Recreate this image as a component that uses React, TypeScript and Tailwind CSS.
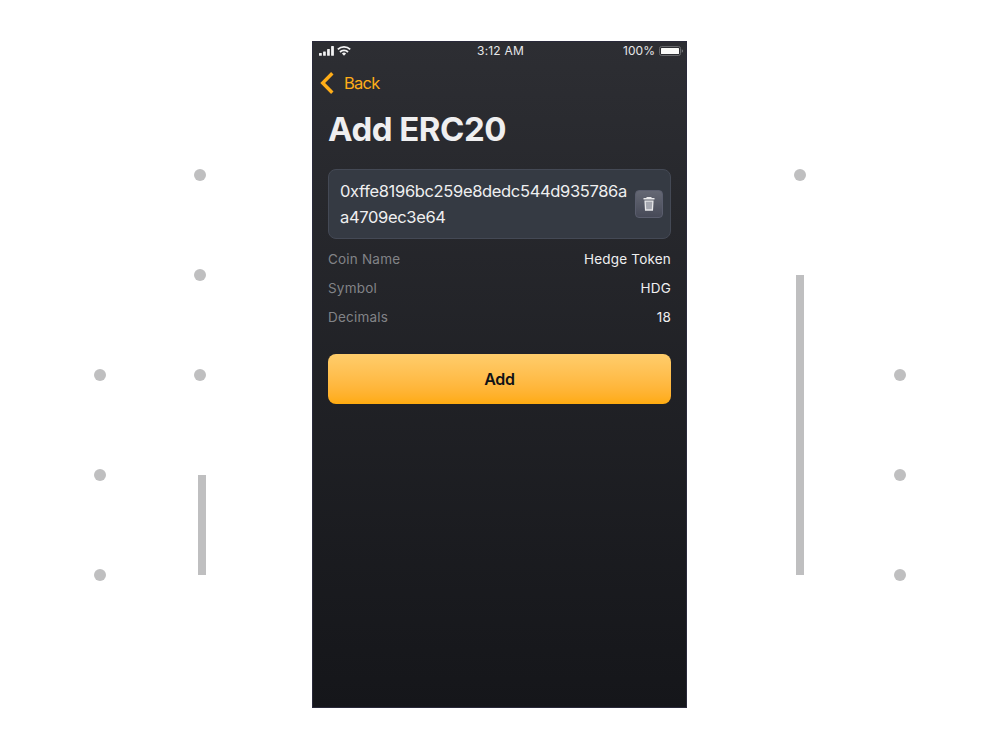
const Dot = () => <span className="block size-3 shrink-0 rounded-full bg-[#bfbfc0]" />;

const details = [
  { label: "Coin Name", value: "Hedge Token" },
  { label: "Symbol", value: "HDG" },
  { label: "Decimals", value: "18" },
];

function StatusBar() {
  return (
    <div className="grid h-5 grid-cols-3 items-center text-[12px] leading-5 text-[#e6e6e8]">
      <div className="flex items-center pl-[7px]">
        <svg width="34" height="12" viewBox="0 0 34 12" fill="#f2f2f3">
          <rect x="0" y="8" width="2.8" height="2.8" rx=".5" />
          <rect x="4.1" y="6.5" width="2.7" height="4.3" rx=".5" />
          <rect x="8.1" y="4" width="2.7" height="6.8" rx=".5" />
          <rect x="12.1" y="1" width="2.8" height="9.8" rx=".5" />
          <g fill="none" stroke="#f2f2f3" strokeWidth="1.8">
            <path d="M18.8 4.3a8.9 8.9 0 0 1 12.4 0" />
            <path d="M21 7a5.6 5.6 0 0 1 8 0" />
          </g>
          <path d="M25 10.7l-2.1-2.1a3 3 0 0 1 4.2 0z" />
        </svg>
      </div>
      <div className="pl-0.5 text-center tracking-[0.2px]">3:12 AM</div>
      <div className="flex items-center justify-end pr-[4px]">
        <span className="mr-[3px] tracking-[0.05px]">100%</span>
        <svg width="25" height="12" viewBox="0 0 25 12">
          <rect x="1.5" y="1.5" width="21" height="9" rx="2" fill="none" stroke="#68696d" />
          <rect x="3" y="3" width="18" height="6" rx=".5" fill="#fafaf9" />
          <path d="M23.8 4.3q1.2.4 1.2 1.7t-1.2 1.7z" fill="#808185" />
        </svg>
      </div>
    </div>
  );
}

function Phone() {
  return (
    <main className="h-[667px] w-[375px] shrink-0 bg-linear-to-b from-[#2d2e33] to-[#15161a] shadow-[inset_0_0_0_1px_#29293a]">
      <StatusBar />
      <button className="mt-[11px] flex h-[22px] items-center gap-[10px] pl-2 text-[16.5px] leading-[22px] tracking-[-0.75px] text-[#ffad18]">
        <svg width="14" height="22" viewBox="0 0 14 22" fill="none" stroke="#ffad18" strokeWidth="3.4">
          <path d="M12.3 1.3 2.7 11l9.6 9.7" />
        </svg>
        <span>Back</span>
      </button>
      <div className="px-4">
        <h1 className="mt-[15px] text-[33px] leading-[41px] font-bold tracking-[-0.5px] text-[#efeff0]">Add ERC20</h1>
        <div className="mt-[19px] flex h-[70px] items-center justify-between rounded-lg border border-[#444955] bg-[#353a43] pr-[7px] pl-[11px]">
          <p className="w-[289px] text-[16.5px] leading-[26px] tracking-[-0.34px] text-[#efeff0]">
            0xffe8196bc259e8dedc544d935786a<br />a4709ec3e64
          </p>
          <button aria-label="Clear" className="grid size-7 shrink-0 place-items-center rounded-[4px] border border-[#5a5d6d] bg-linear-to-b from-[#656874] to-[#474a58]">
            <svg width="12" height="14" viewBox="0 0 12 14">
              <path d="M.5 1h3V0h5v1h3v1.6H.5z" fill="#e9e9eb" />
              <path d="M2.1 4.2h7.8l-.5 8.8H2.6z" fill="#a5a7b0" stroke="#e9e9eb" strokeWidth="1.3" />
            </svg>
          </button>
        </div>
        <dl className="mt-[6px] text-[13.5px] leading-[29px] tracking-[0.2px]">
          {details.map(({ label, value }) => (
            <div key={label} className="flex justify-between">
              <dt className="text-[#828387]">{label}</dt>
              <dd className="text-[#efeff0]">{value}</dd>
            </div>
          ))}
        </dl>
        <button className="mt-[22px] h-[50px] w-full rounded-lg bg-linear-to-b from-[#ffcd6b] to-[#ffab0d] text-[16px] font-semibold tracking-[-0.3px] text-[#111216]">Add</button>
      </div>
    </main>
  );
}

export default function App() {
  return (
    <div className="flex h-[750px] w-[1000px] items-start overflow-hidden bg-white font-['Inter',sans-serif]">
      <div className="flex w-[312px] shrink-0 gap-[88px] pl-[94px]">
        <div className="flex flex-col gap-[88px] pt-[369px]"><Dot /><Dot /><Dot /></div>
        <div className="flex flex-col gap-[88px] pt-[169px]">
          <Dot /><Dot /><Dot />
          <span className="mt-[6px] h-[100px] w-2 self-end bg-[#bfbfc0]" />
        </div>
      </div>
      <div className="pt-[41px]"><Phone /></div>
      <div className="flex gap-[88px] pl-[107px]">
        <div className="flex flex-col items-center pt-[169px]">
          <Dot />
          <span className="mt-[94px] h-[300px] w-2 bg-[#bfbfc0]" />
        </div>
        <div className="flex flex-col gap-[88px] pt-[369px]"><Dot /><Dot /><Dot /></div>
      </div>
    </div>
  );
}
